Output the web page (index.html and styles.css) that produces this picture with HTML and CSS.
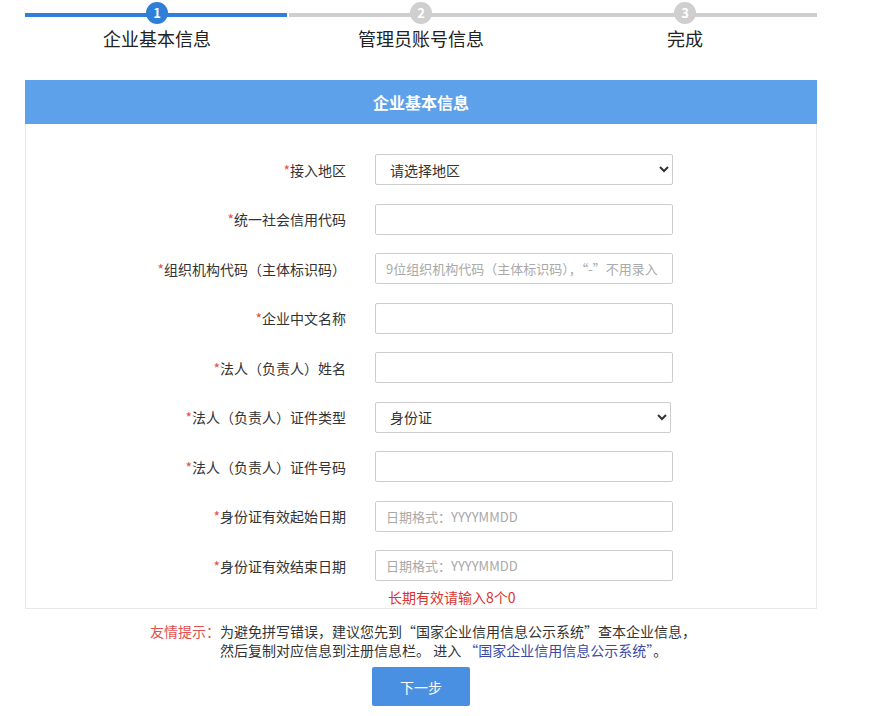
FILE: index.html
```html
<!DOCTYPE html>
<html lang="zh-CN">
<head>
  <meta charset="UTF-8">
  <title>企业注册 - 企业基本信息</title>
  <link rel="stylesheet" href="styles.css">
</head>
<body>
<div class="wrap">
  <!-- 步骤条 -->
  <div class="steps">
    <div class="step done">
      <span class="step-num">1</span>
      <span class="step-name">企业基本信息</span>
    </div>
    <div class="step">
      <span class="step-num">2</span>
      <span class="step-name">管理员账号信息</span>
    </div>
    <div class="step">
      <span class="step-num">3</span>
      <span class="step-name">完成</span>
    </div>
  </div>

  <!-- 表单面板 -->
  <form class="panel" id="regForm">
    <div class="panel-title">企业基本信息</div>
    <div class="panel-body">
      <div class="form-row">
        <label><em>*</em>接入地区</label>
        <select>
          <option>请选择地区</option>
        </select>
      </div>
      <div class="form-row">
        <label><em>*</em>统一社会信用代码</label>
        <input type="text">
      </div>
      <div class="form-row">
        <label><em>*</em>组织机构代码（主体标识码）</label>
        <input type="text" placeholder="9位组织机构代码（主体标识码），“-”不用录入">
      </div>
      <div class="form-row">
        <label><em>*</em>企业中文名称</label>
        <input type="text">
      </div>
      <div class="form-row">
        <label><em>*</em>法人（负责人）姓名</label>
        <input type="text">
      </div>
      <div class="form-row">
        <label><em>*</em>法人（负责人）证件类型</label>
        <select class="short">
          <option>身份证</option>
        </select>
      </div>
      <div class="form-row">
        <label><em>*</em>法人（负责人）证件号码</label>
        <input type="text">
      </div>
      <div class="form-row">
        <label><em>*</em>身份证有效起始日期</label>
        <input type="text" placeholder="日期格式：YYYYMMDD">
      </div>
      <div class="form-row">
        <label><em>*</em>身份证有效结束日期</label>
        <input type="text" placeholder="日期格式：YYYYMMDD">
      </div>
      <div class="form-tip">长期有效请输入8个0</div>
    </div>
  </form>

  <!-- 友情提示 -->
  <div class="notice">
    <span class="notice-label">友情提示：</span>
    <p>为避免拼写错误，建议您先到“国家企业信用信息公示系统”查本企业信息，<br>
      然后复制对应信息到注册信息栏。 进入 <a href="#">“国家企业信用信息公示系统”</a>。</p>
  </div>

  <div class="actions">
    <button type="submit" form="regForm">下一步</button>
  </div>
</div>
</body>
</html>
```

FILE: styles.css
```css
/* 全局 */
body {
  margin: 0;
  font-family: "Noto Sans CJK SC", "Liberation Sans", sans-serif;
  color: #333;
  background: #fff;
}

.wrap {
  width: 792px;
  margin-left: 25px;
}

/* 步骤条 */
.steps {
  display: flex;
  padding-top: 2px;
}

.step {
  position: relative;
  width: 264px;
  display: flex;
  flex-direction: column;
  align-items: center;
}

.step::before {
  content: "";
  position: absolute;
  left: 0;
  right: 0;
  top: 11px;
  height: 4px;
  background: #cfcfcf;
}

.step.done::before {
  background: #2f7fd8;
  right: 2px;
}

.step-num {
  position: relative; /* 压在线条上面 */
  width: 22px;
  height: 22px;
  border-radius: 50%;
  background: #cfcfcf;
  color: #fff;
  font-size: 13px;
  font-weight: bold;
  line-height: 22px;
  text-align: center;
}

.step.done .step-num {
  background: #2f7fd8;
}

.step-name {
  margin-top: 2px;
  font-size: 18px;
  line-height: 24px;
  color: #222;
}

/* 面板 */
.panel {
  margin: 30px 0 0;
}

.panel-title {
  height: 44px;
  line-height: 44px;
  background: #5da1ea;
  color: #fff;
  font-size: 16px;
  font-weight: bold;
  text-align: center;
}

.panel-body {
  border: 1px solid #e9e9e9;
  border-top: none;
  padding: 30px 0 1px;
}

.form-row {
  display: grid;
  grid-template-columns: 320px 298px;
  column-gap: 29px;
  align-items: center;
  margin-bottom: 18.5px;
}

.form-row:nth-last-child(2) {
  margin-bottom: 0;
}

.form-row label {
  text-align: right;
  font-size: 14px;
}

.form-row label em {
  font-style: normal;
  color: #e0504e;
}

.form-row input,
.form-row select {
  box-sizing: border-box;
  width: 298px;
  height: 31px;
  border: 1px solid #ccc;
  border-radius: 2px;
  background: #fff;
  font-family: inherit;
  font-size: 13px;
  color: #333;
}

.form-row input {
  padding: 0 10px;
}

.form-row select {
  padding: 0 10px;
  font-size: 14px;
}

.form-row select.short {
  width: 296px;
}

.form-row input::placeholder {
  color: #a9a9a9;
}

.form-tip {
  margin: 6px 0 0 362px;
  font-size: 14px;
  line-height: 20px;
  color: #d9342f;
}

/* 友情提示 */
.notice {
  display: flex;
  justify-content: center;
  margin-top: 13px;
  font-size: 14px;
  line-height: 19px;
  padding-left: 4px;
}

.notice-label {
  color: #e0504e;
}

.notice p {
  margin: 0;
}

.notice a {
  color: #3b4aa8;
  text-decoration: none;
}

/* 按钮 */
.actions {
  text-align: center;
  margin-top: 7px;
}

.actions button {
  width: 98px;
  height: 39px;
  border: none;
  border-radius: 2px;
  background: #4a90e2;
  color: #fff;
  font-family: inherit;
  font-size: 14px;
  cursor: pointer;
}
```
